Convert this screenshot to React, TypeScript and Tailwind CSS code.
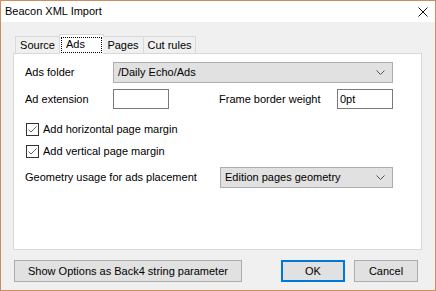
import React from "react";

const font = { fontFamily: '"Liberation Sans", Arial, sans-serif' };

function Chevron() {
  return (
    <svg width="9" height="5" viewBox="0 0 9 5" className="shrink-0">
      <path d="M0.5 0.5 L4.5 4.5 L8.5 0.5" fill="none" stroke="#555" strokeWidth="1" />
    </svg>
  );
}

function Select({ value, className }: { value: string; className: string }) {
  return (
    <div className={`flex items-center justify-between bg-[#e1e1e1] border border-[#adadad] pl-[4px] pr-[7px] ${className}`}>
      <span>{value}</span>
      <Chevron />
    </div>
  );
}

function Check({ label }: { label: string }) {
  return (
    <div className="flex items-center h-[13px]">
      <div className="w-[13px] h-[13px] border border-[#333] bg-white flex items-center justify-center ml-[1px]">
        <svg width="11" height="11" viewBox="0 0 11 11">
          <path d="M1.5 5.5 L4 8 L9.5 2.5" fill="none" stroke="#666" strokeWidth="1" />
        </svg>
      </div>
      <span className="ml-[4px]">{label}</span>
    </div>
  );
}

export default function App() {
  return (
    <div
      className="w-[436px] h-[291px] border border-[#cf8d5e] bg-[#f0f0f0] flex flex-col text-[11px] text-black leading-none"
      style={font}
    >
      <div className="h-[21px] bg-white flex items-center justify-between pl-[4px] pr-[7px] shrink-0">
        <span className="text-[11px]">Beacon XML Import</span>
        <svg width="10" height="10" viewBox="0 0 10 10">
          <path d="M0.5 0.5 L9.5 9.5 M9.5 0.5 L0.5 9.5" stroke="#111" strokeWidth="1" />
        </svg>
      </div>
      <div className="flex-1 flex flex-col pl-[12px] pt-[12px]">
        <div className="h-[19px] flex items-end pl-[2px] relative z-10">
          <div className="w-[45px] h-[17px] border border-b-0 border-[#d9d9d9] bg-[#f0f0f0] flex items-center justify-center">
            Source
          </div>
          <div className="w-[45px] h-[20px] -mb-px -ml-px border border-b-0 border-[#d9d9d9] bg-white flex items-start justify-center pt-[2px]">
            <div className="w-[41px] h-[16px] border border-dotted border-black flex items-center pl-[4px] pb-[2px]">
              Ads
            </div>
          </div>
          <div className="w-[41px] h-[17px] -ml-px border border-b-0 border-l-0 border-[#d9d9d9] bg-[#f0f0f0] flex items-center justify-center">
            Pages
          </div>
          <div className="w-[52px] h-[17px] border border-b-0 border-l-0 border-[#d9d9d9] bg-[#f0f0f0] flex items-center justify-center">
            Cut rules
          </div>
        </div>
        <div className="w-[409px] h-[197px] border border-[#d9d9d9] bg-white pt-[8px] pl-[11px] flex flex-col">
          <div className="flex items-center h-[21px]">
            <span className="w-[88px]">Ads folder</span>
            <Select value="/Daily Echo/Ads" className="w-[280px] h-[21px]" />
          </div>
          <div className="flex items-center h-[20px] mt-[6px]">
            <span className="w-[88px]">Ad extension</span>
            <div className="w-[56px] h-[20px] border border-[#7a7a7a] bg-white" />
            <span className="ml-[50px] w-[118px]">Frame border weight</span>
            <div className="w-[56px] h-[20px] border border-[#7a7a7a] bg-white flex items-center pl-[2px]">0pt</div>
          </div>
          <div className="mt-[14px]">
            <Check label="Add horizontal page margin" />
          </div>
          <div className="mt-[9px]">
            <Check label="Add vertical page margin" />
          </div>
          <div className="flex items-center h-[21px] mt-[9px]">
            <span className="w-[195px]">Geometry usage for ads placement</span>
            <Select value="Edition pages geometry" className="w-[173px] h-[21px]" />
          </div>
        </div>
        <div className="flex items-center mt-[10px]">
          <div className="ml-[1px] w-[228px] h-[22px] bg-[#e1e1e1] border border-[#adadad] flex items-center justify-center">
            Show Options as Back4 string parameter
          </div>
          <div className="ml-[39px] w-[64px] h-[22px] bg-[#e1e1e1] border-2 border-[#0078d7] flex items-center justify-center">
            OK
          </div>
          <div className="ml-[9px] w-[64px] h-[22px] bg-[#e1e1e1] border border-[#adadad] flex items-center justify-center">
            Cancel
          </div>
        </div>
      </div>
    </div>
  );
}
